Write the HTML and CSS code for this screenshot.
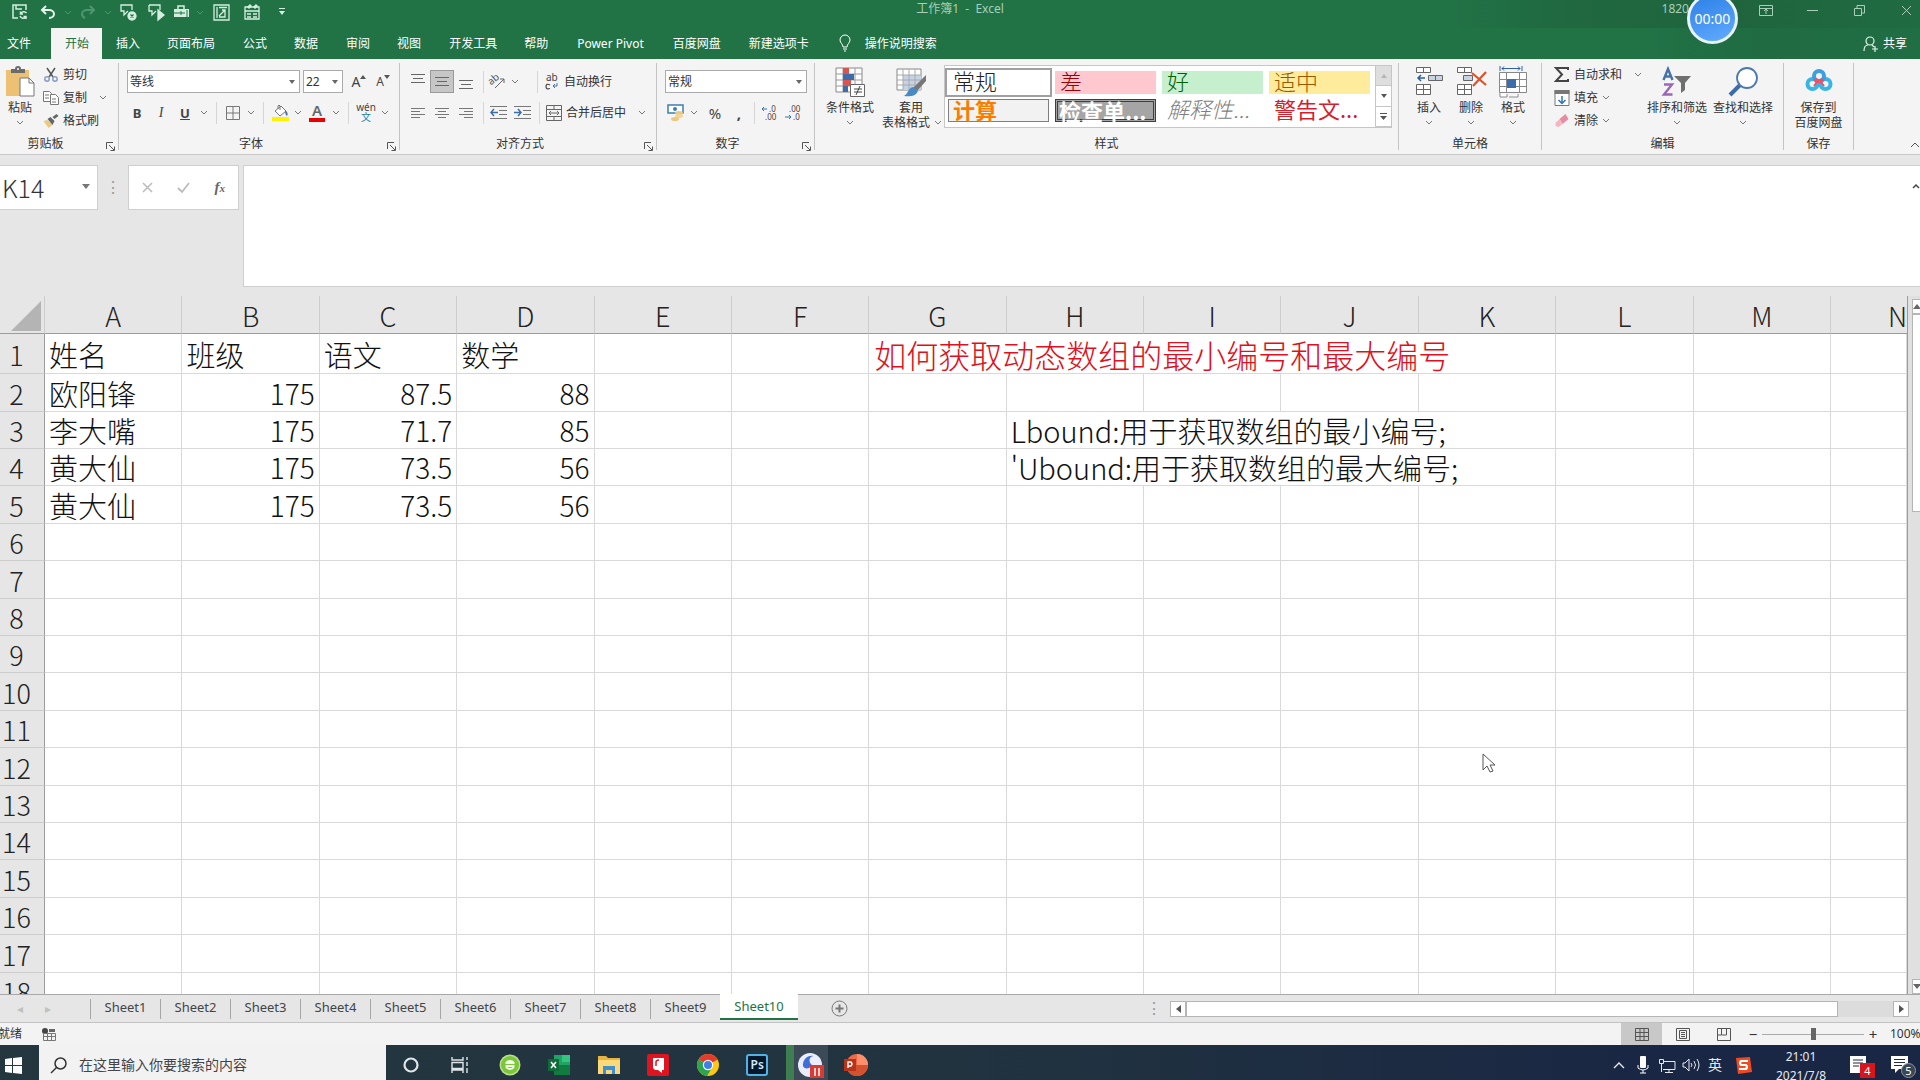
FILE: index.html
```html
<!DOCTYPE html>
<html lang="zh-CN">
<head>
<meta charset="utf-8">
<title>工作簿1 - Excel</title>
<link rel="stylesheet" href="styles.css">
</head>
<body>
<svg class="defs" aria-hidden="true">
  <symbol id="chev" viewBox="0 0 8 5"><path d="M1 1l3 3 3-3" fill="none" stroke="currentColor"/></symbol>
  <symbol id="launch" viewBox="0 0 9 9"><path d="M.5 7V.5H7M3 3l5 5M8.500 4.500v4h-4" fill="none" stroke="#555"/></symbol>
</svg>

<header class="titlebar">
  <div class="quick">
    <button class="q" aria-label="保存"><svg width="16" height="16" viewBox="0 0 16 16" fill="none" stroke="#d5efdf" stroke-width="1.500"><path d="M6 14H1V1h13v5M4 1v4h6M14.500 9a3.500 3.500 0 0 0-6 1M8 12a3.500 3.500 0 0 0 6 1M8.500 7.500V10H11M14 15v-2.500h-2.500"/></svg></button>
    <button class="q" aria-label="撤消"><svg width="16" height="14" viewBox="0 0 16 14" fill="none" stroke="#e4f5ea" stroke-width="2"><path d="M6 1L2 5l4 4M2 5h7c3 0 5 2 5 4s-2 4-5 4"/></svg></button>
    <button class="qc faint" aria-label="撤消列表"><svg width="8" height="5"><use href="#chev"/></svg></button>
    <button class="q faint" aria-label="恢复"><svg width="16" height="14" viewBox="0 0 16 14" fill="none" stroke="currentColor" stroke-width="2"><path d="M10 1l4 4-4 4M14 5H7C4 5 2 7 2 9s1 3 3 4"/></svg></button>
    <button class="qc faint" aria-label="恢复列表"><svg width="8" height="5"><use href="#chev"/></svg></button>
    <button class="q" aria-label="删除批注"><svg width="17" height="17" viewBox="0 0 17 17" fill="none" stroke="#d5efdf" stroke-width="1.300"><path d="M12 6V1H1v6h3v4l4-4"/><circle cx="12" cy="12" r="4" fill="#d5efdf"/><path d="M10.500 10.500l3 3m0-3l-3 3" stroke="#217346"/></svg></button>
    <button class="q" aria-label="显示批注"><svg width="17" height="17" viewBox="0 0 17 17" fill="none" stroke="#d5efdf" stroke-width="1.300"><path d="M1 1h11v5M1 1v6h3v4l4-4"/><path d="M10 6v10l6-5z" fill="#d5efdf"/></svg></button>
    <button class="q slim" aria-label="工具箱"><svg width="18" height="14" viewBox="0 0 18 14"><path d="M1 4h15v8H1z" fill="#d5efdf"/><path d="M5 4V1h6v3" fill="none" stroke="#d5efdf" stroke-width="1.500"/><path d="M1 8h11M8 6v4M14 5v8" stroke="#217346"/></svg></button>
    <button class="qc faint" aria-label="工具箱列表"><svg width="8" height="5"><use href="#chev"/></svg></button>
    <button class="q wide" aria-label="数据透视表"><svg width="17" height="17" viewBox="0 0 17 17" fill="none" stroke="#d5efdf" stroke-width="1.300"><path d="M1 1h15v15H1zM4 3v11M6 3.500h8M12 6v7H6M6 12l6-6M9 6h3v3"/></svg></button>
    <button class="q wide" aria-label="窗体"><svg width="17" height="16" viewBox="0 0 17 16" fill="none" stroke="#d5efdf" stroke-width="1.300"><path d="M1 3h14v12H1zM1 7h14M3 10h4M9 10h4M3 13h4M9 13h4"/><path d="M4 4l3-3M10 4l3-3" stroke-width="3"/></svg></button>
    <button class="q" aria-label="自定义快速访问工具栏"><svg width="8" height="8" viewBox="0 0 8 8" fill="#d5efdf"><path d="M1 0h6v1H1zM1 3h6L4 7z"/></svg></button>
  </div>
  <h1 class="doc">工作簿1&nbsp; -&nbsp; Excel</h1>
  <div class="win">
    <span class="user">1820</span>
    <button class="w" aria-label="功能区显示选项"><svg width="14" height="11" viewBox="0 0 14 11" fill="none" stroke="currentColor"><path d="M.5.500h13v10H.500zM.5 3.500h13M7 9V4M5 6l2-2 2 2"/></svg></button>
    <button class="w" aria-label="最小化"><svg width="11" height="11" viewBox="0 0 11 11" stroke="currentColor"><path d="M0 5.500h11"/></svg></button>
    <button class="w" aria-label="还原"><svg width="11" height="11" viewBox="0 0 11 11" fill="none" stroke="currentColor"><path d="M.5 3.500h7v7h-7zM3 3V.500h7.500V8H8"/></svg></button>
    <button class="w" aria-label="关闭"><svg width="11" height="11" viewBox="0 0 11 11" stroke="currentColor"><path d="M1 1l9 9m0-9l-9 9"/></svg></button>
    <div class="timer">00:00</div>
  </div>
</header>

<nav class="tabs">
  <button class="tab file">文件</button><button class="tab on">开始</button><button class="tab">插入</button><button class="tab">页面布局</button><button class="tab">公式</button><button class="tab">数据</button><button class="tab">审阅</button><button class="tab">视图</button><button class="tab">开发工具</button><button class="tab">帮助</button><button class="tab pivot">Power Pivot</button><button class="tab">百度网盘</button><button class="tab">新建选项卡</button>
  <button class="tab tell"><svg width="12" height="17" viewBox="0 0 12 17" fill="none" stroke="#fff"><path d="M4 12C4 9 1 8 1 5a5 5 0 0 1 10 0c0 3-3 4-3 7zM4 14h4M5 16h2"/></svg>操作说明搜索</button>
  <button class="tab share"><svg width="15" height="16" viewBox="0 0 15 16" fill="none" stroke="#e4f5ea" stroke-width="1.200"><circle cx="7" cy="5" r="4"/><path d="M1 15c0-4 2-6 4-6M9 9l2 2M12 10v6M9 13h6"/></svg>共享</button>
</nav>

<section class="ribbon">
  <div class="group clip">
    <div class="gbody">
      <button class="big paste"><svg width="30" height="32" viewBox="0 0 30 32"><path d="M1 4h23v26H1z" fill="#ecc173"/><path d="M6 3h4a3 3 0 0 1 6 0h4v4H6z" fill="#6b6b6b"/><circle cx="13" cy="3" r="1" fill="#fff"/><path d="M15 12h9l5 5v13H15z" fill="#fff" stroke="#777"/><path d="M24 12v5h5" fill="none" stroke="#777"/></svg><span>粘贴</span><span><svg width="8" height="5"><use href="#chev"/></svg></span></button>
      <div class="stack">
        <button class="small"><svg width="14" height="14" viewBox="0 0 14 14" fill="none" stroke="#555" stroke-width="1.500"><path d="M3 0l6 9M11 0L5 9"/><circle cx="3" cy="11" r="2.200" stroke="#8a9cc4"/><circle cx="11" cy="11" r="2.200" stroke="#8a9cc4"/></svg>剪切</button>
        <button class="small"><svg width="16" height="14" viewBox="0 0 16 14" fill="#fff" stroke="#777"><path d="M.5.500h6l2 2v8h-8zM2 4h4M2 7h4"/><path d="M7.500 3.500h5l3 3v7h-8zM9 8h4M9 11h4"/></svg>复制<svg class="mc" width="8" height="5"><use href="#chev"/></svg></button>
        <button class="small"><svg width="15" height="14" viewBox="0 0 15 14"><path d="M0 7l4-1 5 5-4 3z" fill="#ecc97c"/><path d="M4 5l3-2 4 4-2 4z" fill="#666"/><path d="M9 3l4-3 2 2-4 3z" fill="#666"/></svg>格式刷</button>
      </div>
    </div>
    <div class="glabel"><span>剪贴板</span><button aria-label="剪贴板设置"><svg width="9" height="9"><use href="#launch"/></svg></button></div>
  </div>

  <div class="group font">
    <div class="gbody rows">
      <div class="row lead">
        <span class="combo fname"><select aria-label="字体"><option>等线</option></select></span>
        <span class="combo fsize"><select aria-label="字号"><option>22</option></select></span>
        <button class="t grow" aria-label="增大字号">A<svg width="6" height="4" viewBox="0 0 6 4"><path d="M0 4h6L3 0z" fill="#555"/></svg></button>
        <button class="t shrink" aria-label="减小字号">A<svg width="6" height="4" viewBox="0 0 6 4"><path d="M0 0h6L3 4z" fill="#555"/></svg></button>
      </div>
      <div class="row">
        <button class="t"><b>B</b></button><button class="t ital"><i>I</i></button><button class="t"><b><u>U</u></b></button><button class="tc" aria-label="下划线类型"><svg width="8" height="5"><use href="#chev"/></svg></button><i class="sep"></i>
        <button class="t n" aria-label="边框"><svg width="14" height="14" viewBox="0 0 14 14" fill="none" stroke="#777"><path d="M.5.500h13v13H.500zM7 0v14M0 7h14"/></svg></button><button class="tc" aria-label="边框类型"><svg width="8" height="5"><use href="#chev"/></svg></button><i class="sep"></i>
        <button class="t n" aria-label="填充颜色"><svg width="17" height="17" viewBox="0 0 17 17"><path d="M0 13h17v4H0z" fill="#fff200"/><path d="M3 7l6-5 5 5-6 5zM6 5V2q1-2 2 0v4" fill="#fff" stroke="#777"/><path d="M13 6q4 3 2 6-2-1-2-6" fill="#4472a8"/></svg></button><button class="tc" aria-label="填充颜色列表"><svg width="8" height="5"><use href="#chev"/></svg></button>
        <button class="t color">A</button><button class="tc" aria-label="字体颜色列表"><svg width="8" height="5"><use href="#chev"/></svg></button><i class="sep"></i>
        <button class="t wen"><span>wén</span><span>文</span></button><button class="tc" aria-label="拼音列表"><svg width="8" height="5"><use href="#chev"/></svg></button>
      </div>
    </div>
    <div class="glabel"><span>字体</span><button aria-label="字体设置"><svg width="9" height="9"><use href="#launch"/></svg></button></div>
  </div>

  <div class="group align">
    <div class="gbody rows">
      <div class="row">
        <button class="t" aria-label="顶端对齐"><svg width="14" height="15" viewBox="0 0 14 15" stroke="#666"><path d="M0 .5h14M2 4.500h10M0 8.500h14"/></svg></button><button class="t sel" aria-label="垂直居中"><svg width="14" height="11" viewBox="0 0 14 11" stroke="#666"><path d="M0 1.500h14M2 5.500h10M0 9.500h14"/></svg></button><button class="t" aria-label="底端对齐"><svg width="14" height="15" viewBox="0 0 14 15" stroke="#666"><path d="M0 6.500h14M2 10.500h10M0 14.500h14"/></svg></button><i class="sep"></i>
        <button class="t n" aria-label="方向"><svg width="17" height="15" viewBox="0 0 17 15"><text x="1" y="9" font-size="10" fill="#555" transform="rotate(-40 5 9)">ab</text><path d="M6 14L15 5M11 5h4v4" fill="none" stroke="#666"/></svg></button><button class="tc" aria-label="方向列表"><svg width="8" height="5"><use href="#chev"/></svg></button><i class="sep far"></i>
        <button class="small"><svg width="16" height="16" viewBox="0 0 16 16"><text x="2" y="7" font-size="10" fill="#444">ab</text><path d="M6 11q-4-2-4 1.500t4 2" fill="none" stroke="#444" stroke-width="1.200"/><path d="M13 9v3H9M11 10l-2 2 2 2" fill="none" stroke="#4472a8"/></svg>自动换行</button>
      </div>
      <div class="row">
        <button class="t" aria-label="左对齐"><svg width="14" height="12" viewBox="0 0 14 12" stroke="#777"><path d="M0 1.500h14M0 4.500h9M0 7.500h14M0 10.500h9"/></svg></button><button class="t" aria-label="居中"><svg width="14" height="12" viewBox="0 0 14 12" stroke="#777"><path d="M0 1.500h14M3 4.500h8M0 7.500h14M3 10.500h8"/></svg></button><button class="t" aria-label="右对齐"><svg width="14" height="12" viewBox="0 0 14 12" stroke="#777"><path d="M0 1.500h14M5 4.500h9M0 7.500h14M5 10.500h9"/></svg></button><i class="sep"></i>
        <button class="t" aria-label="减少缩进量"><svg width="17" height="13" viewBox="0 0 17 13" fill="none" stroke="#777"><path d="M0 .5h17M9 4.500h8M9 8.500h8M0 12.500h17"/><path d="M8 6.500H1M4 3L1 6.500 4 10" stroke="#3c6daa" stroke-width="1.500"/></svg></button><button class="t" aria-label="增加缩进量"><svg width="17" height="13" viewBox="0 0 17 13" fill="none" stroke="#777"><path d="M0 .5h17M9 4.500h8M9 8.500h8M0 12.500h17"/><path d="M0 6.500h7M4 3l3 3.500L4 10" stroke="#3c6daa" stroke-width="1.500"/></svg></button><i class="sep near"></i>
        <button class="small"><svg width="16" height="16" viewBox="0 0 16 16" fill="none" stroke="#666"><path d="M.5.500h15v15H.500zM.5 4.500h15M.5 11.500h15M8 0v4M8 12v4"/><path d="M3 8h10M5 6L3 8l2 2M11 6l2 2-2 2"/></svg>合并后居中<svg class="mc" width="8" height="5"><use href="#chev"/></svg></button>
      </div>
    </div>
    <div class="glabel"><span>对齐方式</span><button aria-label="对齐设置"><svg width="9" height="9"><use href="#launch"/></svg></button></div>
  </div>

  <div class="group number">
    <div class="gbody rows">
      <div class="row lead"><span class="combo fmt"><select aria-label="数字格式"><option>常规</option></select></span></div>
      <div class="row lead">
        <button class="t n" aria-label="会计数字格式"><svg width="18" height="17" viewBox="0 0 18 17"><path d="M1 1h15v8H1z" fill="#fff" stroke="#3c7fb1" stroke-width="1.500"/><circle cx="8" cy="5" r="2" fill="#3c7fb1"/><ellipse cx="12" cy="9" rx="4" ry="2" fill="#ecc97c"/><ellipse cx="12" cy="12" rx="4" ry="2" fill="#f1d69a"/><ellipse cx="8" cy="15" rx="4" ry="2" fill="#ecc97c"/></svg></button><button class="tc" aria-label="货币列表"><svg width="8" height="5"><use href="#chev"/></svg></button>
        <button class="t pct">%</button><button class="t pct"><b>,</b></button><i class="sep tight"></i>
        <button class="t" aria-label="增加小数位数"><svg width="16" height="15" viewBox="0 0 16 15"><text x="8" y="7" font-size="8" fill="#444">.0</text><text x="4" y="15" font-size="8" fill="#444">.00</text><path d="M6 4H1M3 2L1 4l2 2" fill="none" stroke="#2f75b5"/></svg></button><button class="t" aria-label="减少小数位数"><svg width="16" height="15" viewBox="0 0 16 15"><text x="4" y="7" font-size="8" fill="#444">.00</text><text x="8" y="15" font-size="8" fill="#444">.0</text><path d="M0 12h6M4 10l2 2-2 2" fill="none" stroke="#2f75b5"/></svg></button>
      </div>
    </div>
    <div class="glabel"><span>数字</span><button aria-label="数字设置"><svg width="9" height="9"><use href="#launch"/></svg></button></div>
  </div>

  <div class="group styles">
    <div class="gbody">
      <button class="big"><svg width="30" height="32" viewBox="0 0 30 32"><path d="M1 2h26v24H1z" fill="#fff" stroke="#888"/><path d="M1 8h26M1 14h26M1 20h26M8 2v24M20 2v24" stroke="#999"/><path d="M8 2h6v6H8zM8 14h8v6H8z" fill="#d9534f"/><path d="M8 8h11v6H8zM8 20h5v6H8z" fill="#3c6daa"/><path d="M15.500 18.500h14v12h-14z" fill="#fff" stroke="#666"/><path d="M19 23h8M19 26h8M25 20l-4 9" stroke="#444"/></svg><span>条件格式</span><span><svg width="8" height="5"><use href="#chev"/></svg></span></button>
      <button class="big tbl"><svg width="30" height="32" viewBox="0 0 30 32"><path d="M1 3h24v21H1z" fill="#fff" stroke="#888"/><path d="M7 9h18v15H7z" fill="#c5d3e6"/><path d="M1 9h24M1 14h24M1 19h24M7 3v21M13 3v21M19 3v21" stroke="#aaa"/><path d="M30 9v6l-9 10-4-3z" fill="#777"/><path d="M17 21l5 4c-2 5-8 6-14 5 4-2 4-8 9-9" fill="#4a8ac4"/></svg><span>套用</span><span class="tail">表格格式<svg width="8" height="5"><use href="#chev"/></svg></span></button>
      <div class="gallery">
        <div class="cells">
          <button class="st normal">常规</button><button class="st bad">差</button><button class="st good">好</button><button class="st neutral">适中</button>
          <button class="st calc">计算</button><button class="st check">检查单...</button><button class="st expl">解释性...</button><button class="st warn">警告文...</button>
        </div>
        <div class="gs"><button class="off" aria-label="上一行"><svg width="6" height="4" viewBox="0 0 6 4"><path d="M0 4h6L3 0z" fill="#b5b5b5"/></svg></button><button aria-label="下一行"><svg width="6" height="4" viewBox="0 0 6 4"><path d="M0 0h6L3 4z" fill="#555"/></svg></button><button aria-label="更多样式"><svg width="7" height="7" viewBox="0 0 7 7" fill="#555"><path d="M0 0h7v1H0zM0 3h7L3.500 7z"/></svg></button></div>
      </div>
    </div>
    <div class="glabel"><span>样式</span></div>
  </div>

  <div class="group cellsg">
    <div class="gbody">
      <button class="big c"><svg width="28" height="32" viewBox="0 0 28 32" fill="#fff" stroke="#666"><path d="M1.500 1.500h14v5h-14zM8.500 1v5M1.500 18.500h14v10h-14zM1.500 23.500h14M8.500 18v10"/><path d="M13.500 9.500h14v5h-14zM20.500 9v5" fill="#c9d3e2"/><path d="M10 12H3M6 9l-3 3 3 3" fill="none" stroke="#2f5fa0" stroke-width="1.500"/></svg><span>插入</span><span><svg width="8" height="5"><use href="#chev"/></svg></span></button>
      <button class="big c"><svg width="30" height="32" viewBox="0 0 30 32" fill="#fff" stroke="#666"><path d="M1.500 1.500h14v5h-14zM8.500 1v5M1.500 18.500h14v10h-14zM1.500 23.500h14M8.500 18v10"/><path d="M7.500 9.500h9v5h-9z" fill="#c9d3e2"/><path d="M16 7l14 12M30 6L17 20" stroke="#d9532c" stroke-width="2.200"/></svg><span>删除</span><span><svg width="8" height="5"><use href="#chev"/></svg></span></button>
      <button class="big c"><svg width="30" height="32" viewBox="0 0 30 32" fill="#fff" stroke="#888"><path d="M1.500 6.500h27v20h-27zM1 13.500h28M1 20.500h28M8.500 6v20M21.500 6v20M2 27v4h7v-3M11 31h9v-3"/><path d="M9 13h9v9H9z" fill="#3c6daa" stroke="none"/><path d="M2 0v5M24 0v5M4 2.500h18M6 .5l-2 2 2 2M20 .5l2 2-2 2" fill="none" stroke="#2f5fa0"/></svg><span>格式</span><span><svg width="8" height="5"><use href="#chev"/></svg></span></button>
    </div>
    <div class="glabel"><span>单元格</span></div>
  </div>

  <div class="group edit">
    <div class="gbody">
      <div class="stack">
        <button class="small"><svg width="16" height="15" viewBox="0 0 16 15" fill="none" stroke="#444" stroke-width="2"><path d="M14 3V1H2l6 6.500L2 14h12v-2"/></svg>自动求和<svg class="mc" width="8" height="5"><use href="#chev"/></svg></button>
        <button class="small"><svg width="15" height="16" viewBox="0 0 15 16"><path d="M.5.500h14v15H.500z" fill="#fff" stroke="#777"/><path d="M0 0h15v4H0z" fill="#777"/><path d="M7.500 6v7M4 10l3.500 3.500L11 10" fill="none" stroke="#2f75b5" stroke-width="1.500"/></svg>填充<svg class="nc" width="8" height="5"><use href="#chev"/></svg></button>
        <button class="small"><svg width="15" height="14" viewBox="0 0 15 14"><path d="M5 5l6-5 3 5-6 5z" fill="#e88aa0"/><path d="M1 9l4-4 3 5-4 3-3-1z" fill="#f3b6c3"/></svg>清除<svg class="nc" width="8" height="5"><use href="#chev"/></svg></button>
      </div>
      <button class="big e"><svg width="30" height="32" viewBox="0 0 30 32" fill="none" stroke-width="2.400"><path d="M1.500 14L6 3l4.500 11M3 10.500h6" stroke="#4472a8"/><path d="M2 18.500h8L2 28.500h8.500" stroke="#9966b8"/><path d="M12 10h17l-6 7v7l-4 3V17z" fill="#6f6f6f"/></svg><span>排序和筛选</span><span><svg width="8" height="5"><use href="#chev"/></svg></span></button>
      <button class="big e"><svg width="30" height="32" viewBox="0 0 30 32"><path d="M12 19L2 29" stroke="#3c6daa" stroke-width="4"/><circle cx="19" cy="12" r="10" fill="#fff" stroke="#4a78b0" stroke-width="1.800"/></svg><span>查找和选择</span><span><svg width="8" height="5"><use href="#chev"/></svg></span></button>
    </div>
    <div class="glabel"><span>编辑</span></div>
  </div>

  <div class="group save">
    <div class="gbody">
      <button class="big"><svg width="28" height="32" viewBox="0 0 28 32" fill="none" stroke-width="4"><circle cx="7.500" cy="18" r="5" stroke="#35b6e6"/><circle cx="20.500" cy="18" r="5" stroke="#35b6e6"/><circle cx="14" cy="10" r="5" stroke="#3b9fe0"/><path d="M10 13c2 3 6 3 8 0" stroke="#e8526a"/><path d="M12 16l-3 4M16 16l3 4" stroke="#e8526a" stroke-width="2"/></svg><span>保存到</span><span>百度网盘</span></button>
    </div>
    <div class="glabel"><span>保存</span></div>
  </div>
  <button class="fold" aria-label="折叠功能区"><svg width="10" height="6" viewBox="0 0 10 6" fill="none" stroke="#555"><path d="M1 5l4-4 4 4"/></svg></button>
</section>

<section class="fbar">
  <div class="namebox"><input aria-label="名称框" value="K14"><svg width="8" height="5" viewBox="0 0 8 5"><path d="M0 0h8L4 5z" fill="#777"/></svg></div>
  <span class="dots">⋮</span>
  <div class="fx">
    <button aria-label="取消"><svg width="11" height="11" viewBox="0 0 11 11" stroke="#bbb" stroke-width="1.500"><path d="M1 1l9 9m0-9l-9 9"/></svg></button>
    <button aria-label="输入"><svg width="13" height="11" viewBox="0 0 13 11" fill="none" stroke="#bbb" stroke-width="1.800"><path d="M1 6l4 4 7-9"/></svg></button>
    <button class="fn" aria-label="插入函数"><i>f<sub>x</sub></i></button>
  </div>
  <div class="formula"><textarea aria-label="编辑栏"></textarea><button aria-label="折叠编辑栏"><svg width="8" height="6" viewBox="0 0 8 6" fill="none" stroke="#444" stroke-width="1.500"><path d="M1 5l3-3 3 3"/></svg></button></div>
</section>

<main class="sheet">
  <div class="gridwrap">
    <table class="grid">
      <colgroup><col class="rh"><col><col><col><col><col><col><col><col><col><col><col><col><col><col class="part"></colgroup>
      <thead><tr><th class="corner"><svg width="30" height="30" viewBox="0 0 30 30"><path d="M30 0v30H0z" fill="#b4b4b4"/></svg></th><th>A</th><th>B</th><th>C</th><th>D</th><th>E</th><th>F</th><th>G</th><th>H</th><th>I</th><th>J</th><th>K</th><th>L</th><th>M</th><th class="cut">N</th></tr></thead>
      <tbody>
        <tr class="first"><th>1</th><td>姓名</td><td>班级</td><td>语文</td><td>数学</td><td></td><td></td><td class="red" colspan="5">如何获取动态数组的最小编号和最大编号</td><td></td><td></td><td></td></tr>
        <tr><th>2</th><td>欧阳锋</td><td class="num">175</td><td class="num">87.5</td><td class="num">88</td><td></td><td></td><td></td><td></td><td></td><td></td><td></td><td></td><td></td><td></td></tr>
        <tr><th>3</th><td>李大嘴</td><td class="num">175</td><td class="num">71.7</td><td class="num">85</td><td></td><td></td><td></td><td colspan="4">Lbound:用于获取数组的最小编号;</td><td></td><td></td><td></td></tr>
        <tr><th>4</th><td>黄大仙</td><td class="num">175</td><td class="num">73.5</td><td class="num">56</td><td></td><td></td><td></td><td colspan="4">'Ubound:用于获取数组的最大编号;</td><td></td><td></td><td></td></tr>
        <tr><th>5</th><td>黄大仙</td><td class="num">175</td><td class="num">73.5</td><td class="num">56</td><td></td><td></td><td></td><td></td><td></td><td></td><td></td><td></td><td></td><td></td></tr>
        <tr><th>6</th><td></td><td></td><td></td><td></td><td></td><td></td><td></td><td></td><td></td><td></td><td></td><td></td><td></td><td></td></tr>
        <tr><th>7</th><td></td><td></td><td></td><td></td><td></td><td></td><td></td><td></td><td></td><td></td><td></td><td></td><td></td><td></td></tr>
        <tr><th>8</th><td></td><td></td><td></td><td></td><td></td><td></td><td></td><td></td><td></td><td></td><td></td><td></td><td></td><td></td></tr>
        <tr><th>9</th><td></td><td></td><td></td><td></td><td></td><td></td><td></td><td></td><td></td><td></td><td></td><td></td><td></td><td></td></tr>
        <tr><th>10</th><td></td><td></td><td></td><td></td><td></td><td></td><td></td><td></td><td></td><td></td><td></td><td></td><td></td><td></td></tr>
        <tr><th>11</th><td></td><td></td><td></td><td></td><td></td><td></td><td></td><td></td><td></td><td></td><td></td><td></td><td></td><td></td></tr>
        <tr><th>12</th><td></td><td></td><td></td><td></td><td></td><td></td><td></td><td></td><td></td><td></td><td></td><td></td><td></td><td></td></tr>
        <tr><th>13</th><td></td><td></td><td></td><td></td><td></td><td></td><td></td><td></td><td></td><td></td><td></td><td></td><td></td><td></td></tr>
        <tr><th>14</th><td></td><td></td><td></td><td></td><td></td><td></td><td></td><td></td><td></td><td></td><td></td><td></td><td></td><td></td></tr>
        <tr><th>15</th><td></td><td></td><td></td><td></td><td></td><td></td><td></td><td></td><td></td><td></td><td></td><td></td><td></td><td></td></tr>
        <tr><th>16</th><td></td><td></td><td></td><td></td><td></td><td></td><td></td><td></td><td></td><td></td><td></td><td></td><td></td><td></td></tr>
        <tr><th>17</th><td></td><td></td><td></td><td></td><td></td><td></td><td></td><td></td><td></td><td></td><td></td><td></td><td></td><td></td></tr>
        <tr><th>18</th><td></td><td></td><td></td><td></td><td></td><td></td><td></td><td></td><td></td><td></td><td></td><td></td><td></td><td></td></tr>
      </tbody>
    </table>
    <svg class="cursor" width="14" height="21" viewBox="0 0 14 21"><path d="M1 1v16l4-4 3 6 3-1-3-6h5z" fill="#fff" stroke="#555"/></svg>
  </div>
  <div class="vscroll"><button aria-label="向上滚动"><svg width="8" height="5" viewBox="0 0 8 5"><path d="M0 5h8L4 0z" fill="#666"/></svg></button><div class="vthumb"></div><button class="down" aria-label="向下滚动"><svg width="8" height="5" viewBox="0 0 8 5"><path d="M0 0h8L4 5z" fill="#666"/></svg></button></div>
</main>

<nav class="sheets">
  <div class="nav"><button aria-label="上一个工作表">◂</button><button aria-label="下一个工作表">▸</button></div>
  <button class="s">Sheet1</button><button class="s">Sheet2</button><button class="s">Sheet3</button><button class="s">Sheet4</button><button class="s">Sheet5</button><button class="s">Sheet6</button><button class="s">Sheet7</button><button class="s">Sheet8</button><button class="s">Sheet9</button><button class="s on">Sheet10</button>
  <button class="add" aria-label="新工作表"><svg width="17" height="17" viewBox="0 0 17 17" fill="none" stroke="#777"><circle cx="8.500" cy="8.500" r="7.500"/><path d="M8.500 4.500v8M4.500 8.500h8" stroke-width="2"/></svg></button>
  <span class="dots">⋮</span>
  <div class="hscroll"><button aria-label="向左滚动"><svg width="5" height="8" viewBox="0 0 5 8"><path d="M5 0v8L0 4z" fill="#555"/></svg></button><div class="hthumb"></div><div class="htrack"></div><button aria-label="向右滚动"><svg width="5" height="8" viewBox="0 0 5 8"><path d="M0 0v8l5-4z" fill="#555"/></svg></button></div>
</nav>

<footer class="status">
  <span class="ready">就绪</span>
  <svg width="14" height="13" viewBox="0 0 14 13"><circle cx="3" cy="3" r="3" fill="#444"/><path d="M7 1h6v3H7z" fill="#666"/><path d="M1.500 5.500h12v7h-12zM1 8.500h12M5.500 5v7M9.500 5v7" fill="none" stroke="#777"/></svg>
  <div class="views">
    <button class="v on" aria-label="普通"><svg width="14" height="13" viewBox="0 0 14 13" fill="none" stroke="#555"><path d="M.5.500h13v12H.500zM0 4.500h14M0 8.500h14M5 0v13M9 0v13"/></svg></button>
    <button class="v" aria-label="页面布局"><svg width="14" height="13" viewBox="0 0 14 13" fill="none" stroke="#555"><path d="M.5.500h13v12H.500zM3.500 2.500h7v8h-7zM5 4.500h4M5 6.500h4M5 8.500h4"/></svg></button>
    <button class="v" aria-label="分页预览"><svg width="14" height="13" viewBox="0 0 14 13" fill="none" stroke="#555"><path d="M.5.500h13v12H.500zM4.500 0v7h5V0M0 7h4"/></svg></button>
  </div>
  <button class="z">−</button><input class="zoom" type="range" aria-label="缩放" min="0" max="100" value="50"><button class="z">+</button><span class="pc">100%</span>
</footer>

<footer class="taskbar">
  <button class="start" aria-label="开始"><svg width="17" height="17" viewBox="0 0 17 17" fill="#fff"><path d="M0 2l7-1v7H0zM8 1l9-1v8H8zM0 9h7v7l-7-1zM8 9h9v8l-9-1z"/></svg></button>
  <label class="search"><svg width="17" height="17" viewBox="0 0 17 17" fill="none" stroke="#333" stroke-width="1.500"><circle cx="10.500" cy="6.500" r="5.500"/><path d="M6.500 10.500L1 16"/></svg><input aria-label="搜索" placeholder="在这里输入你要搜索的内容"></label>
  <div class="apps">
    <button aria-label="Cortana"><svg width="16" height="16" viewBox="0 0 16 16"><circle cx="8" cy="8" r="6.500" fill="none" stroke="#dfe6ea" stroke-width="2.200"/></svg></button>
    <button aria-label="任务视图"><svg width="18" height="16" viewBox="0 0 18 16" fill="none" stroke="#dfe6ea" stroke-width="1.400"><path d="M1 0v3h11V0M1 5.500h11v6H1zM1 16v-3h11v3M16 0v3M16 5v4M16 11v5"/></svg></button>
    <button aria-label="浏览器"><svg width="22" height="22" viewBox="0 0 22 22"><circle cx="11" cy="11" r="10.500" fill="#b9e08f"/><circle cx="11" cy="11" r="9" fill="#7cc63a"/><path d="M6.500 9h9M6.500 12h9M7 9a5 5 0 0 1 8 0M7 13a5 5 0 0 0 8 0" fill="none" stroke="#f2fbe9" stroke-width="1.800"/></svg></button>
    <button aria-label="Excel"><svg width="22" height="20" viewBox="0 0 22 20"><path d="M6 0h16v20H6z" fill="#21a366"/><path d="M14 0h8v7h-8z" fill="#33c481"/><path d="M6 10h16v10H6z" fill="#107c41"/><path d="M0 4h11v12H0z" fill="#0f6b38"/><path d="M3 7l5 6M8 7l-5 6" stroke="#fff" stroke-width="1.500"/></svg></button>
    <button aria-label="文件资源管理器"><svg width="22" height="18" viewBox="0 0 22 18"><path d="M0 0h8l2 2h12v16H0z" fill="#e8b33f"/><path d="M0 4h22v14H0z" fill="#fbd978"/><path d="M5 18v-8h12v8h-3v-4H8v4z" fill="#3f8fd0"/></svg></button>
    <button aria-label="阅读"><svg width="22" height="22" viewBox="0 0 22 22"><rect width="22" height="22" rx="2" fill="#e01420"/><path d="M6 4h11v12h-2v3l-4-3H8l-2-2z" fill="#fff"/><path d="M9 12V8q0-2 3-2" fill="none" stroke="#e01420" stroke-width="1.500"/></svg></button>
    <button aria-label="Chrome"><svg width="22" height="22" viewBox="0 0 22 22"><circle cx="11" cy="11" r="11" fill="#fbc816"/><path d="M11 11L1.500 5.500A11 11 0 0 1 20.500 5.500z" fill="#e33b2e"/><path d="M11 11L1.500 5.500A11 11 0 0 0 10 22l5.500-9z" fill="#2da44e"/><circle cx="11" cy="11" r="5.200" fill="#fff"/><circle cx="11" cy="11" r="4" fill="#3f7fe8"/></svg></button>
    <button aria-label="Photoshop"><span class="ps">Ps</span></button>
    <button class="live" aria-label="录屏"><svg width="26" height="26" viewBox="0 0 26 26"><circle cx="12" cy="13" r="12" fill="#e9eefa"/><path d="M5 14A9 9 0 0 1 16 4c-5 0-6 6-2 9-3 5-8 4-9 1" fill="#3f6fd6"/><path d="M12 13h14v13H12z" fill="#d83a34"/><path d="M17 16v8M21 16v8" stroke="#fff" stroke-width="1.500"/></svg></button>
    <button aria-label="PowerPoint"><svg width="24" height="22" viewBox="0 0 24 22"><circle cx="13" cy="11" r="11" fill="#ed6c47"/><path d="M13 0a11 11 0 0 1 11 11H13z" fill="#ff8f6b"/><path d="M2 11h22a11 11 0 0 1-22 0" fill="#d35230"/><path d="M0 5h12v12H0z" fill="#b7341a"/><path d="M4 14V8h3q2 2 0 4H4" fill="none" stroke="#fff" stroke-width="1.400"/></svg></button>
  </div>
  <div class="tray">
    <button aria-label="显示隐藏的图标"><svg width="12" height="8" viewBox="0 0 12 8" fill="none" stroke="#e6eaf0" stroke-width="1.400"><path d="M1 7l5-5 5 5"/></svg></button>
    <button aria-label="麦克风"><svg width="12" height="18" viewBox="0 0 12 18"><rect x="3" width="6" height="12" rx="1" fill="#fff"/><path d="M1 9v3q5 4 10 0V9M6 14v3M3 17h6" fill="none" stroke="#fff"/></svg></button>
    <button aria-label="网络"><svg width="17" height="15" viewBox="0 0 17 15" fill="none" stroke="#e6eaf0"><path d="M5 3.500h11v8H4M6 14.500h8M10 12v2M.5 1.500h4v4h-4zM2.500 6v8"/></svg></button>
    <button aria-label="音量"><svg width="18" height="14" viewBox="0 0 18 14" fill="none" stroke="#e6eaf0"><path d="M1 5h2l4-4v12L3 9H1zM9 5q2 2 0 4M12 3q3 4 0 8M15 1q4 6 0 12"/></svg></button>
    <button>英</button>
    <button class="ime" aria-label="搜狗输入法"><svg width="17" height="17" viewBox="0 0 17 17"><path d="M1 1l14-1 2 15-14 2z" fill="#f04a23"/><path d="M13 4H6q-2 2 0 4h5q2 2 0 4H4" fill="none" stroke="#fff" stroke-width="2.200"/></svg></button>
    <div class="clock"><span>21:01</span><span>2021/7/8</span></div>
    <button class="note"><svg width="16" height="18" viewBox="0 0 16 18"><path d="M0 0h16v17H0z" fill="#fff"/><path d="M3 4h10M3 7h10M3 10h6" stroke="#1c2b42"/></svg><span class="badge red">4</span></button>
    <button class="note last"><svg width="17" height="18" viewBox="0 0 17 18"><path d="M0 0h17v13H8l-4 4v-4H0z" fill="#fff"/><path d="M3 3.500h11M3 6.500h11M3 9.500h8" stroke="#1c2b42"/></svg><span class="badge">5</span></button>
  </div>
</footer>
</body>
</html>
```

FILE: styles.css
```css
* { box-sizing: border-box; }
html, body { height: 100%; }
body {
  margin: 0; display: flex; flex-direction: column; overflow: hidden;
  font: 12px/16px "Noto Sans", "Noto Sans CJK SC", sans-serif; color: #333; background: #e6e6e6;
}
button {
  border: 0; background: none; padding: 0; margin: 0; font: inherit; color: inherit;
  display: flex; align-items: center; justify-content: center; flex: none; white-space: nowrap;
}
input, textarea, select { font: inherit; color: inherit; border: 0; outline: 0; background: none; padding: 0; margin: 0; min-width: 0; }
svg { flex: none; display: block; overflow: visible; }
.defs { position: absolute; width: 0; height: 0; }

/* title bar */
.titlebar {
  flex: none; height: 28px; display: grid; grid-template-columns: 1fr auto 1fr; align-items: start;
  color: #a9cfb9; background: linear-gradient(90deg, #217346 75%, #206840 82%, #1f643d 90%, #206b42);
}
.quick { display: flex; height: 24px; padding-left: 6px; }
.q { width: 28px; }
.q.slim { width: 24px; }
.q.wide { width: 31px; }
.qc { width: 12px; }
.faint { color: #4f9670; }
.doc { margin: 0; font-size: 12px; font-weight: 400; line-height: 18px; }
.win { display: flex; justify-content: flex-end; height: 20px; position: relative; }
.user { margin-right: 53px; line-height: 18px; }
.w { width: 47px; }
.w:last-of-type { width: 37px; padding-left: 10px; }
.timer {
  position: absolute; right: 182px; top: -7px; width: 51px; height: 51px; border-radius: 50%;
  border: 3px solid #e8f3fd; background: linear-gradient(160deg, #2b7fe6, #62acff);
  color: #fff; font-size: 14px; line-height: 45px; text-align: center; z-index: 2;
}

/* ribbon tabs */
.tabs { flex: none; height: 31px; display: flex; background: linear-gradient(90deg, #217346 85%, #206b42 92%, #206e44); color: #fff; }
.tab { padding: 0 13px 0 14px; height: 31px; }
.tab:nth-child(even) { padding-right: 14px; }
.tab.file { padding: 0 20px 0 7px; }
.tab.on { background: #f4f4f4; color: #217346; padding-right: 13px; }
.tab.pivot { padding: 0 15px; }
.tab.tell { gap: 14px; padding-left: 17px; }
.tab.share { margin-left: auto; gap: 5px; padding-right: 13px; }

/* ribbon */
.ribbon { flex: none; height: 96px; display: flex; background: #f4f4f4; border-bottom: 1px solid #c8c8c8; padding: 4px 0; }
.group { flex: none; display: flex; flex-direction: column; border-right: 1px solid #c4c4c4; }
.gbody { height: 75px; display: flex; }
.glabel { display: flex; height: 12px; line-height: 12px; }
.glabel span { flex: 1; text-align: center; }
.glabel button { width: 16px; padding-top: 4px; }
.clip { width: 119px; }
.clip .glabel span { padding-right: 11px; }
.font { width: 281px; }
.align { width: 257px; }
.number { width: 158px; }
.styles { width: 584px; }
.cellsg { width: 143px; }
.edit { width: 242px; }
.save { width: 70px; }
.save .big { width: 69px; }
.big { flex-direction: column; justify-content: flex-start; padding-top: 3px; }
.big span { height: 15px; line-height: 15px; display: flex; align-items: center; justify-content: center; }
.big svg + span { margin-top: 2px; }
.paste { width: 43px; padding-right: 3px; }
.stack { display: flex; flex-direction: column; }
.small { height: 23px; justify-content: flex-start; gap: 4px; }
.clip .small > svg:first-child, .edit .small > svg:first-child { width: 16px; }
.mc { margin-left: 8px; color: #777; }
.nc { color: #777; }
.tc, .big span svg { color: #777; }
.rows { flex-direction: column; gap: 8px; padding: 7px 0 0 6px; }
.row { display: flex; align-items: center; height: 23px; }
.row.lead { padding-left: 2px; }
.combo { position: relative; display: flex; height: 23px; border: 1px solid #ababab; background: #fff; }
.combo::after { content: ""; position: absolute; right: 4px; top: 9px; border: 3px solid transparent; border-top: 4px solid #666; border-bottom: 0; pointer-events: none; }
.combo select { appearance: none; width: 100%; padding-left: 2px; }
.fname { width: 173px; }
.fsize { width: 40px; margin: 0 4px 0 3px; }
.fmt { width: 142px; }
.t { width: 24px; height: 23px; font-size: 13px; color: #444; }
.t.n { width: 22px; }
.tc { width: 14px; height: 23px; }
.t.ital { font-family: "Liberation Serif", serif; font-size: 14px; }
.sep { flex: none; width: 1px; height: 22px; background: #d5d5d5; margin: 0 5px; }
.grow { font-size: 14px; }
.shrink { font-size: 12px; }
.grow svg, .shrink svg { align-self: flex-start; margin-top: 5px; }
.color { font-size: 15px; line-height: 15px; font-weight: 600; color: #666; height: 18px; border: solid #e80000; border-width: 0 0 4px; width: 16px; margin: 0 4px; }
.wen { flex-direction: column; font-size: 10px; line-height: 10px; }
.wen span:last-child { color: #2a7f9e; line-height: 11px; }
.sel { background: #c6c6c6; border: 1px solid #9a9a9a; }
.align .sep { margin: 0 2px 0 5px; }
.align .sep.far { margin: 0 6px 0 15px; }
.align .sep.near { margin: 0 6px 0 5px; }
.sep.tight { margin: 0 2px 0 5px; }
.pct { font-size: 15px; padding-left: 4px; }

/* cell styles */
.styles .gbody { padding-left: 5px; }
.styles .big { width: 60px; }
.styles .tbl { width: 64px; }
.tbl > svg, .tbl > span:nth-child(2) { margin-right: 2px; }
.styles .tail { gap: 4px; }
.gallery { width: 448px; height: 63px; margin: 2px 0 0; display: flex; border: 1px solid #c6c6c6; background: #fff; }
.cells { flex: 1; display: grid; grid-template-columns: repeat(4, 101px); grid-auto-rows: 23px; gap: 5px 6px; padding: 5px 3px; }
.st { height: 23px; justify-content: flex-start; align-items: flex-start; padding-left: 5px; font: 300 22px/18px "Noto Sans CJK SC", sans-serif; }
.normal { color: #222; outline: 2px solid #a0a0a0; outline-offset: 1px; }
.bad { background: #ffc7ce; color: #9c0006; }
.good { background: #c6efce; color: #006100; }
.neutral { background: #ffeb9c; color: #9c5700; }
.calc { background: #f2f2f2; color: #fa7d00; border: 1px solid #7f7f7f; font-weight: 700; padding-left: 4px; }
.check { background: #a5a5a5; color: #fff; border: 3px double #3f3f3f; font-weight: 700; padding-left: 1px; line-height: 16px; }
.expl { color: #7f7f7f; font-style: italic; }
.warn { color: #d4202c; font-weight: 400; }
.gs { width: 16px; display: flex; flex-direction: column; border-left: 1px solid #c6c6c6; }
.gs button { flex: 1; border-bottom: 1px solid #c6c6c6; }
.gs .off { background: #dedede; }
.cellsg .gbody { padding-left: 9px; }
.big.c { width: 42px; }
.edit .gbody { padding-left: 12px; }
.edit .stack { width: 90px; }
.big.e { width: 66px; }
.fold { margin-left: auto; width: 10px; align-self: flex-end; height: 10px; }

/* formula bar */
.fbar { flex: none; display: flex; height: 141px; padding: 10px 0 9px; align-items: flex-start; }
.namebox { width: 98px; height: 45px; background: #fff; border: 1px solid #cfcfcf; border-left: 0; display: flex; align-items: center; padding: 0 7px 2px 2px; }
.namebox input { flex: 1; font: 300 25px/30px "Noto Sans CJK SC", sans-serif; color: #333; }
.dots { color: #999; font-size: 16px; }
.fbar .dots { width: 30px; text-align: center; line-height: 44px; }
.fx { width: 111px; height: 45px; background: #fff; border: 1px solid #cfcfcf; display: flex; margin-right: 4px; }
.fx button { flex: 1; }
.fx .fn { font: 700 15px/18px "Liberation Serif", serif; color: #666; }
.fn sub { font-size: 11px; vertical-align: baseline; }
.formula { flex: 1; height: 122px; background: #fff; border: 1px solid #cfcfcf; border-right: 0; display: flex; align-items: flex-start; }
.formula textarea { flex: 1; height: 100%; resize: none; }
.formula button { width: 8px; padding-top: 17px; }

/* worksheet */
.sheet { flex: 1; min-height: 0; display: flex; border-bottom: 1px solid #a8a8a8; }
.gridwrap { flex: 1; min-width: 0; overflow: hidden; position: relative; border-right: 1px solid #9c9c9c; }
.grid { width: 100%; table-layout: fixed; border-collapse: separate; border-spacing: 0; background: #fff; font: 300 29px/34px "Noto Sans CJK SC", sans-serif; color: #111; }
.rh { width: 45px; }
.part { width: 76px; }
.grid th, .grid td { height: 37px; padding: 0; border: solid #d9d9d9; border-width: 0 1px 1px 0; white-space: nowrap; }
.grid tbody tr:nth-child(5n+2) > *, .grid tbody tr:nth-child(5n) > * { height: 38px; }
.grid tbody tr.first > * { height: 40px; }
.grid th { background: #e6e6e6; font-weight: 300; font-size: 27px; line-height: 32px; color: #222; padding-top: 2px; }
.grid thead th { height: 38px; border-color: #cdcdcd #cdcdcd #9c9c9c; }
.grid tbody th { border-color: #cdcdcd #9c9c9c #cdcdcd; padding-right: 11px; }
.grid .corner svg { margin: 0 3px 0 auto; }
.grid .cut { text-align: right; border-right: 0; }
.grid td { padding: 0 4px; }
.grid .num { text-align: right; font-size: 28px; }
.grid .red { color: #e01020; font-size: 32px; padding-left: 5px; }
.cursor { position: absolute; left: 1482px; top: 457px; }
.vscroll { width: 12px; display: flex; flex-direction: column; padding: 3px 0 0 4px; background: #e0e0e0; }
.vscroll button { height: 15px; border: 1px solid #b5b5b5; background: #fff; border-right: 0; }
.vthumb { height: 198px; background: #fff; border: 1px solid #b5b5b5; border-right: 0; }
.vscroll .down { margin-top: auto; }

/* sheet tabs */
.sheets { flex: none; height: 28px; display: flex; border-bottom: 1px solid #c2c2c2; }
.nav { width: 90px; display: flex; color: #c0c0c0; padding-left: 6px; }
.nav button { width: 28px; }
.s { width: 70px; height: 20px; margin-top: 4px; border-left: 1px solid #a5a5a5; font-size: 13px; color: #444; padding-bottom: 4px; }
.s.on { width: 78px; height: 26px; margin-top: -1px; background: #fff; color: #217346; border: solid #217346; border-width: 0 0 2px; padding: 0; }
.add { width: 82px; }
.sheets .dots { margin-left: auto; line-height: 26px; width: 32px; text-align: center; }
.hscroll { flex: 0 1 739px; height: 16px; margin: 6px 11px 0 0; display: flex; background: #dcdcdc; }
.hscroll button { width: 16px; background: #fff; border: 1px solid #b5b5b5; }
.hthumb { flex: 652; background: #fff; border: 1px solid #b5b5b5; }
.htrack { flex: 55; }

/* status bar */
.status { flex: none; height: 22px; display: flex; align-items: center; background: #f3f3f3; overflow: hidden; }
.ready { width: 42px; text-indent: -2px; }
.views { margin-left: auto; display: flex; height: 22px; }
.v { width: 41px; }
.v.on { background: #c8c8c8; }
.z { width: 18px; font-size: 15px; }
.zoom { appearance: none; width: 102px; height: 16px; background: linear-gradient(#aaa, #aaa) center / 100% 1px no-repeat; }
.zoom::-webkit-slider-thumb { appearance: none; width: 5px; height: 12px; background: #666; }
.pc { width: 30px; margin-left: 8px; white-space: nowrap; }

/* taskbar */
.taskbar { flex: none; height: 35px; display: flex; overflow: hidden; background: linear-gradient(90deg, #24373f, #21333f 50%, #1a2744 85%, #1a2744); color: #e6eaf0; }
.taskbar button, .search { height: 40px; }
.start { width: 39px; padding-right: 12px; }
.search { width: 347px; background: #f2f2f2; display: flex; align-items: center; gap: 12px; padding: 0 11px; }
.search input { flex: 1; font-size: 14px; color: #444; }
.search input::placeholder { color: #444; }
.apps { width: 495px; display: grid; grid-template-columns: repeat(10, 1fr); }
.ps { width: 22px; height: 22px; border: 2px solid #4fb3e6; border-radius: 3px; background: #03192b; color: #cfeaff; font-weight: 600; font-size: 12px; line-height: 18px; text-align: center; }
.live { background: #3c4a58; border-left: 8px solid #3f7d52; margin: 0 4px; }
.tray { margin-left: auto; display: flex; }
.tray button { width: 24px; font-size: 14px; }
.tray .ime { width: 32px; }
.clock { width: 84px; display: flex; flex-direction: column; align-items: center; line-height: 19px; padding-top: 2px; }
.tray .note { position: relative; width: 41px; padding-right: 12px; }
.tray .last { width: 36px; padding-right: 6px; }
.badge { position: absolute; left: 17px; top: 18px; width: 15px; height: 15px; border-radius: 50%; background: #3b4553; border: 1px solid #8c96a3; color: #fff; font-size: 11px; line-height: 13px; text-align: center; }
.badge.red { background: #d8141c; border: 0; border-radius: 0; line-height: 15px; }
```
